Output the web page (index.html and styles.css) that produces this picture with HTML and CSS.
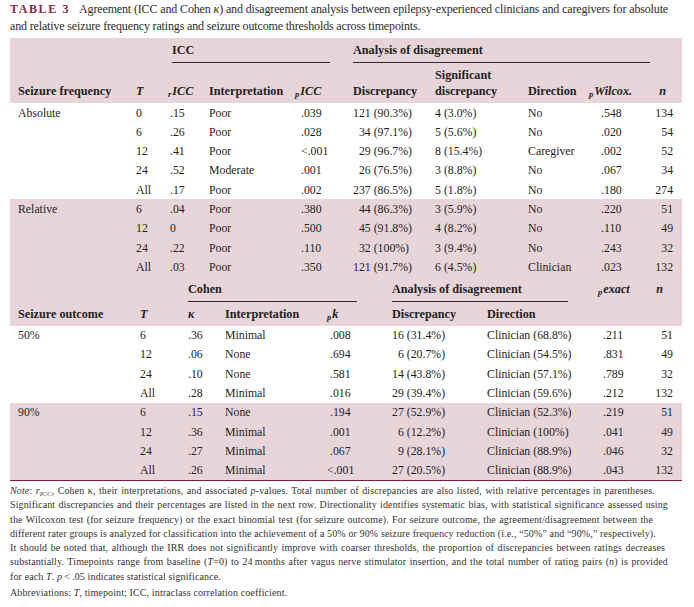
FILE: index.html
```html
<!DOCTYPE html>
<html lang="en">
<head>
    <meta charset="UTF-8" />
    <title>Table 3</title>
    <meta name="viewport" content="width=device-width, initial-scale=1" />
    <link rel="stylesheet" href="styles.css">
</head>
<body>
<div class="page">
    <p class="caption">
        <span class="ln cap-first"><span class="label">TABLE 3</span>Agreement (ICC and Cohen <i>κ</i>) and disagreement analysis between epilepsy-experienced clinicians and caregivers for absolute</span>
        <span class="ln end">and relative seizure frequency ratings and seizure outcome thresholds across timepoints.</span>
    </p>

    <!-- Seizure frequency block -->
    <table class="grid freq">
        <colgroup>
            <col style="width:126px"><col style="width:32px"><col style="width:41px"><col style="width:86px"><col style="width:57px">
            <col style="width:82px"><col style="width:93px"><col style="width:61px"><col style="width:64px"><col style="width:30px">
        </colgroup>
        <thead>
            <tr class="group">
                <th></th><th></th>
                <th colspan="3"><div class="rule rule-icc">ICC</div></th>
                <th colspan="4"><div class="rule rule-dis">Analysis of disagreement</div></th>
                <th></th>
            </tr>
            <tr class="heads">
                <th class="first">Seizure frequency</th>
                <th><i>T</i></th>
                <th><sub>r</sub><i>ICC</i></th>
                <th>Interpretation</th>
                <th><sub>p</sub><i>ICC</i></th>
                <th class="dc">Discrepancy</th>
                <th class="dc">Significant<br>discrepancy</th>
                <th class="dc">Direction</th>
                <th class="dc"><sub>p</sub><i>Wilcox.</i></th>
                <th class="n-head"><i>n</i></th>
            </tr>
        </thead>
        <tbody>
            <tr><td class="first">Absolute</td><td>0</td><td class="v">.15</td><td>Poor</td><td class="pv">.039</td><td class="dc">121 (90.3%)</td><td class="dc">4 (3.0%)</td><td class="dc">No</td><td class="pw">.548</td><td class="n">134</td></tr>
            <tr><td class="first"></td><td>6</td><td class="v">.26</td><td>Poor</td><td class="pv">.028</td><td class="dc ind">34 (97.1%)</td><td class="dc">5 (5.6%)</td><td class="dc">No</td><td class="pw">.020</td><td class="n">54</td></tr>
            <tr><td class="first"></td><td>12</td><td class="v">.41</td><td>Poor</td><td class="pv">&lt;.001</td><td class="dc ind">29 (96.7%)</td><td class="dc">8 (15.4%)</td><td class="dc">Caregiver</td><td class="pw">.002</td><td class="n">52</td></tr>
            <tr><td class="first"></td><td>24</td><td class="v">.52</td><td>Moderate</td><td class="pv">.001</td><td class="dc ind">26 (76.5%)</td><td class="dc">3 (8.8%)</td><td class="dc">No</td><td class="pw">.067</td><td class="n">34</td></tr>
            <tr><td class="first"></td><td>All</td><td class="v">.17</td><td>Poor</td><td class="pv">.002</td><td class="dc">237 (86.5%)</td><td class="dc">5 (1.8%)</td><td class="dc">No</td><td class="pw">.180</td><td class="n">274</td></tr>
        </tbody>
        <tbody class="band">
            <tr><td class="first">Relative</td><td>6</td><td class="v">.04</td><td>Poor</td><td class="pv">.380</td><td class="dc ind">44 (86.3%)</td><td class="dc">3 (5.9%)</td><td class="dc">No</td><td class="pw">.220</td><td class="n">51</td></tr>
            <tr><td class="first"></td><td>12</td><td class="v">0</td><td>Poor</td><td class="pv">.500</td><td class="dc ind">45 (91.8%)</td><td class="dc">4 (8.2%)</td><td class="dc">No</td><td class="pw">.110</td><td class="n">49</td></tr>
            <tr><td class="first"></td><td>24</td><td class="v">.22</td><td>Poor</td><td class="pv">.110</td><td class="dc ind">32 (100%)</td><td class="dc">3 (9.4%)</td><td class="dc">No</td><td class="pw">.243</td><td class="n">32</td></tr>
            <tr><td class="first"></td><td>All</td><td class="v">.03</td><td>Poor</td><td class="pv">.350</td><td class="dc">121 (91.7%)</td><td class="dc">6 (4.5%)</td><td class="dc">Clinician</td><td class="pw">.023</td><td class="n">132</td></tr>
        </tbody>
    </table>

    <!-- Seizure outcome block -->
    <table class="grid outcome">
        <colgroup>
            <col style="width:130px"><col style="width:48px"><col style="width:37px"><col style="width:101px"><col style="width:66px">
            <col style="width:95px"><col style="width:111px"><col style="width:54px"><col style="width:30px">
        </colgroup>
        <thead>
            <tr class="group">
                <th></th><th></th>
                <th colspan="3"><div class="rule rule-cohen">Cohen</div></th>
                <th colspan="2"><div class="rule rule-dis2">Analysis of disagreement</div></th>
                <th rowspan="2" class="top pe-head"><sub>p</sub><i>exact</i></th>
                <th rowspan="2" class="top n-head2"><i>n</i></th>
            </tr>
            <tr class="heads">
                <th class="first">Seizure outcome</th>
                <th><i>T</i></th>
                <th><i>κ</i></th>
                <th>Interpretation</th>
                <th class="pk-head"><sub>p</sub><i>k</i></th>
                <th>Discrepancy</th>
                <th>Direction</th>
            </tr>
        </thead>
        <tbody>
            <tr><td class="first">50%</td><td>6</td><td>.36</td><td>Minimal</td><td class="pk">.008</td><td>16 (31.4%)</td><td>Clinician (68.8%)</td><td class="pe">.211</td><td class="n">51</td></tr>
            <tr><td class="first"></td><td>12</td><td>.06</td><td>None</td><td class="pk">.694</td><td class="ind">6 (20.7%)</td><td>Clinician (54.5%)</td><td class="pe">.831</td><td class="n">49</td></tr>
            <tr><td class="first"></td><td>24</td><td>.10</td><td>None</td><td class="pk">.581</td><td>14 (43.8%)</td><td>Clinician (57.1%)</td><td class="pe">.789</td><td class="n">32</td></tr>
            <tr><td class="first"></td><td>All</td><td>.28</td><td>Minimal</td><td class="pk">.016</td><td>29 (39.4%)</td><td>Clinician (59.6%)</td><td class="pe">.212</td><td class="n">132</td></tr>
        </tbody>
        <tbody class="band last">
            <tr><td class="first">90%</td><td>6</td><td>.15</td><td>None</td><td class="pk">.194</td><td>27 (52.9%)</td><td>Clinician (52.3%)</td><td class="pe">.219</td><td class="n">51</td></tr>
            <tr><td class="first"></td><td>12</td><td>.36</td><td>Minimal</td><td class="pk">.001</td><td class="ind">6 (12.2%)</td><td>Clinician (100%)</td><td class="pe">.041</td><td class="n">49</td></tr>
            <tr><td class="first"></td><td>24</td><td>.27</td><td>Minimal</td><td class="pk">.067</td><td class="ind">9 (28.1%)</td><td>Clinician (88.9%)</td><td class="pe">.046</td><td class="n">32</td></tr>
            <tr><td class="first"></td><td>All</td><td>.26</td><td>Minimal</td><td class="pk lt">&lt;.001</td><td>27 (20.5%)</td><td>Clinician (88.9%)</td><td class="pe">.043</td><td class="n">132</td></tr>
        </tbody>
    </table>

    <div class="notes">
        <p>
            <span class="ln"><i>Note</i>: <i>r</i><sub class="low">ICC</sub>, Cohen κ, their interpretations, and associated <i>p</i>-values. Total number of discrepancies are also listed, with relative percentages in parentheses.</span>
            <span class="ln wide">Significant discrepancies and their percentages are listed in the next row. Directionality identifies systematic bias, with statistical significance assessed using</span>
            <span class="ln short">the Wilcoxon test (for seizure frequency) or the exact binomial test (for seizure outcome). For seizure outcome, the agreement/disagreement between the</span>
            <span class="ln">different rater groups is analyzed for classification into the achievement of a 50% or 90% seizure frequency reduction (i.e., “50%” and “90%,” respectively).</span>
            <span class="ln mid">It should be noted that, although the IRR does not significantly improve with coarser thresholds, the proportion of discrepancies between ratings decreases</span>
            <span class="ln wide">substantially. Timepoints range from baseline (<i>T</i>=0) to 24&#8201;months after vagus nerve stimulator insertion, and the total number of rating pairs (<i>n</i>) is provided</span>
            <span class="ln end">for each <i>T</i>. <i>p</i>&#8201;&lt;&#8201;.05 indicates statistical significance.</span>
        </p>
        <p class="abbr">Abbreviations: <i>T</i>, timepoint; ICC, intraclass correlation coefficient.</p>
    </div>
</div>
</body>
</html>
```

FILE: styles.css
```css
* {
    box-sizing: border-box;
}
body {
    margin: 0;
    background: #fff;
    color: #231f20;
    font-family: "Liberation Serif", "Times New Roman", serif;
}
.page {
    width: 694px;
    padding: 1px 12px 0 10px;
}
/* Typeset lines: each line is stretched to the width it has in print */
.ln {
    display: block;
    width: 645px;
    white-space: nowrap;
    text-align-last: justify;
}
.ln.wide { width: 658px; }
.ln.mid { width: 655px; }
.ln.short { width: 643px; }
.ln.end {
    width: auto;
    text-align-last: auto;
}
/* Caption above the table */
.caption {
    margin: 0 0 3px;
    font-size: 12px;
    line-height: 17px;
    letter-spacing: -0.15px;
    color: #2b2b2b;
}
.cap-first {
    width: 658px;
}
.label {
    color: #8a2846;
    font-weight: bold;
    letter-spacing: 1.6px;
    margin-right: 9px;
}
/* Shared table look */
.grid {
    width: 672px;
    border-collapse: collapse;
    table-layout: fixed;
    font-size: 11.8px;
}
.grid thead {
    background: #e8d5da;
}
.grid th {
    padding: 0;
    font-size: 12.2px;
    font-weight: bold;
    line-height: 16px;
    text-align: left;
    vertical-align: bottom;
    white-space: nowrap;
}
.grid td {
    padding: 1.65px 0;
    line-height: 16px;
    vertical-align: middle;
    white-space: nowrap;
}
.grid sub {
    font-size: 70%;
    font-style: italic;
    line-height: 0;
    vertical-align: -2px;
    margin-right: 1px;
}
.band td {
    background: #e8d5da;
}
.last tr:last-child td {
    border-bottom: 1.5px solid #7b1f3a;
}
.first {
    padding-left: 8px !important;
}
/* Group header row with short rules */
.group th {
    padding-top: 4px;
    vertical-align: top;
}
.rule {
    padding-bottom: 4px;
    border-bottom: 1px solid #2b2b2b;
}
.rule-icc { margin: 0 22px 0 4px; }
.rule-dis { margin: 0 2px 0 1px; }
.rule-cohen { margin: 0 35px 0 0; }
.rule-dis2 { margin: 0 30px 0 0; }
.freq .heads th {
    padding-top: 4px;
    padding-bottom: 4px;
}
.outcome .heads th {
    padding-top: 4px;
    padding-bottom: 4px;
    vertical-align: middle;
}
.top {
    vertical-align: top !important;
    padding-top: 4px !important;
}
/* Column offsets */
.grid .dc { padding-left: 1px; }
.grid .v { padding-left: 2px; }
.grid .pv { padding-left: 6px; }
.grid .pw { padding-left: 13px; }
.grid .pk { padding-left: 4px; }
.grid .pk.lt { padding-left: 1px; }
.pk-head { padding-left: 1px !important; }
.grid .pe { padding-left: 5px; }
.grid .ind { padding-left: 0.5em; }
.grid .dc.ind { padding-left: calc(0.5em + 1px); }
.grid .n {
    text-align: right;
    padding-right: 9px;
}
.n-head {
    text-align: right !important;
    padding-right: 16px !important;
}
.n-head2 {
    text-align: right !important;
    padding-right: 19px !important;
}
/* Footnotes */
.notes {
    margin-top: 3.5px;
    font-size: 10px;
    line-height: 14.2px;
    letter-spacing: 0.12px;
    color: #333;
}
.notes p {
    margin: 0;
}
.notes .low {
    font-size: 70%;
    vertical-align: -2px;
    line-height: 0;
    font-style: italic;
}
.abbr {
    margin-top: 2px !important;
}
```
